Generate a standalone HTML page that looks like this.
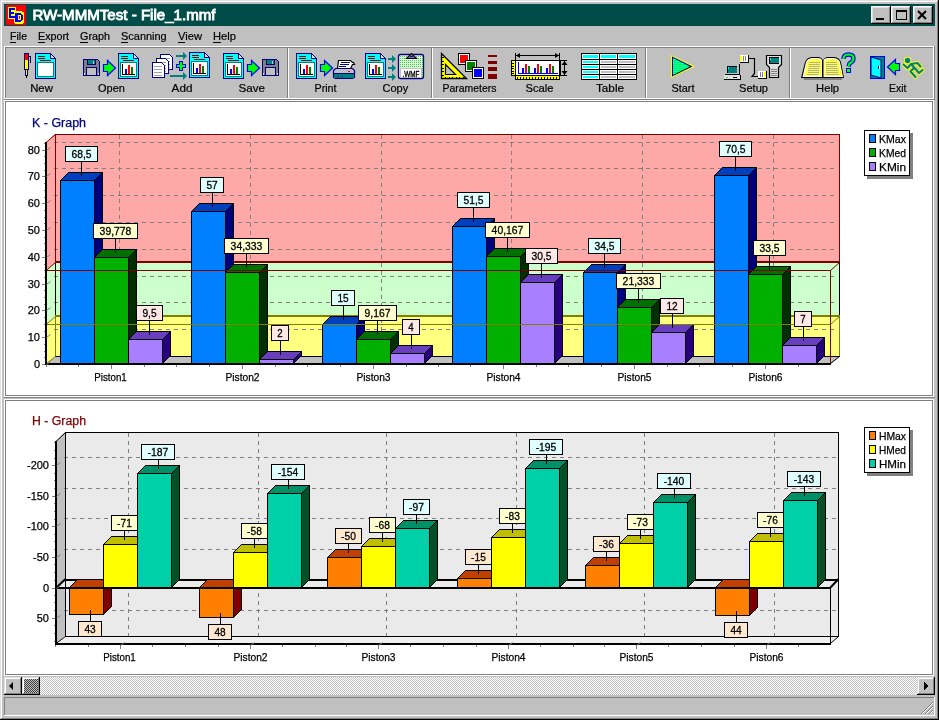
<!DOCTYPE html>
<html><head><meta charset="utf-8"><style>
html,body{margin:0;padding:0;width:939px;height:720px;overflow:hidden;background:#c0c0c0}
body{position:relative;font-family:"Liberation Sans", sans-serif}
.t{position:absolute;white-space:nowrap;line-height:1}
</style></head><body>
<svg width="939" height="720" viewBox="0 0 939 720" style="position:absolute;left:0;top:0;will-change:transform" font-family='"Liberation Sans", sans-serif' shape-rendering="crispEdges"><rect x="0" y="0" width="939" height="720" fill="#c0c0c0" /><rect x="0" y="0" width="939" height="1" fill="#dfdfdf" /><rect x="0" y="0" width="1" height="720" fill="#dfdfdf" /><rect x="1" y="1" width="937" height="1" fill="#ffffff" /><rect x="1" y="1" width="1" height="718" fill="#ffffff" /><rect x="938" y="0" width="1" height="720" fill="#000000" /><rect x="0" y="719" width="939" height="1" fill="#000000" /><rect x="937" y="1" width="1" height="718" fill="#808080" /><rect x="1" y="718" width="937" height="1" fill="#808080" /><rect x="4" y="4" width="931" height="22" fill="#004c48" /><rect x="4" y="46" width="930" height="1" fill="#ffffff" /><rect x="4" y="46" width="1" height="53" fill="#ffffff" /><rect x="5" y="47" width="928" height="1" fill="#808080" /><rect x="5" y="47" width="1" height="51" fill="#808080" /><rect x="5" y="98" width="929" height="1" fill="#ffffff" /><rect x="933" y="47" width="1" height="52" fill="#ffffff" /><rect x="4" y="99" width="931" height="1" fill="#808080" /><rect x="934" y="46" width="1" height="54" fill="#808080" /><rect x="4" y="100" width="930" height="297" fill="#ffffff" /><rect x="5" y="101" width="928" height="295" fill="#808080" /><rect x="6" y="102" width="926" height="293" fill="#ffffff" /><rect x="4" y="397" width="931" height="1" fill="#808080" /><rect x="4" y="399" width="930" height="277" fill="#ffffff" /><rect x="5" y="400" width="928" height="275" fill="#808080" /><rect x="6" y="401" width="926" height="273" fill="#ffffff" /><polygon points="46.00,142.00 55.00,134.00 840.00,134.00 840.00,356.00 830.00,364.00 46.00,364.00" fill="#ffa8a8" stroke="none" stroke-width="1" /><polygon points="46.00,270.50 55.50,262.50 840.00,262.50 840.00,356.00 830.00,364.00 46.00,364.00" fill="#ccffcc" stroke="none" stroke-width="1" shape-rendering="auto"/><polygon points="46.00,324.50 55.50,316.50 840.00,316.50 840.00,356.00 830.00,364.00 46.00,364.00" fill="#ffff80" stroke="none" stroke-width="1" shape-rendering="auto"/><polygon points="46.00,364.00 56.00,356.00 840.00,356.00 831.00,364.00" fill="#c0c0c0" stroke="none" stroke-width="1" shape-rendering="auto"/><line x1="54" y1="329.5" x2="836" y2="329.5" stroke="#808080" stroke-dasharray="4,4"/><line x1="54" y1="302.5" x2="836" y2="302.5" stroke="#808080" stroke-dasharray="4,4"/><line x1="54" y1="276.5" x2="836" y2="276.5" stroke="#808080" stroke-dasharray="4,4"/><line x1="54" y1="249.5" x2="836" y2="249.5" stroke="#808080" stroke-dasharray="4,4"/><line x1="54" y1="222.5" x2="836" y2="222.5" stroke="#808080" stroke-dasharray="4,4"/><line x1="54" y1="195.5" x2="836" y2="195.5" stroke="#808080" stroke-dasharray="4,4"/><line x1="54" y1="168.5" x2="836" y2="168.5" stroke="#808080" stroke-dasharray="4,4"/><line x1="54" y1="142.5" x2="836" y2="142.5" stroke="#808080" stroke-dasharray="4,4"/><line x1="119.5" y1="135" x2="119.5" y2="356" stroke="#808080" stroke-dasharray="4,4"/><line x1="250.5" y1="135" x2="250.5" y2="356" stroke="#808080" stroke-dasharray="4,4"/><line x1="381.5" y1="135" x2="381.5" y2="356" stroke="#808080" stroke-dasharray="4,4"/><line x1="511.5" y1="135" x2="511.5" y2="356" stroke="#808080" stroke-dasharray="4,4"/><line x1="642.5" y1="135" x2="642.5" y2="356" stroke="#808080" stroke-dasharray="4,4"/><line x1="773.5" y1="135" x2="773.5" y2="356" stroke="#808080" stroke-dasharray="4,4"/><rect x="55" y="134" width="785" height="1" fill="#800000" /><rect x="55" y="134" width="1" height="128" fill="#800000" /><rect x="55" y="262" width="1" height="54" fill="#000000" /><rect x="55" y="316" width="1" height="40" fill="#808000" /><rect x="839" y="134" width="1" height="128" fill="#800000" /><rect x="839" y="262" width="1" height="54" fill="#000000" /><rect x="839" y="316" width="1" height="40" fill="#808000" /><rect x="55" y="261" width="785" height="2" fill="#800000" /><rect x="55" y="315" width="785" height="2" fill="#808000" /><rect x="55" y="356" width="785" height="1" fill="#000000" /><line x1="46" y1="142.5" x2="55.5" y2="134.5" stroke="#800000" stroke-width="1" shape-rendering="auto"/><line x1="46" y1="270.5" x2="55.5" y2="262.5" stroke="#800000" stroke-width="1" shape-rendering="auto"/><line x1="46" y1="324.5" x2="55.5" y2="316.5" stroke="#808000" stroke-width="1" shape-rendering="auto"/><line x1="46" y1="364" x2="55.5" y2="356.5" stroke="#808000" stroke-width="1" shape-rendering="auto"/><polygon points="94.50,180.50 102.50,172.50 102.50,355.50 94.50,363.50" fill="#00007f" stroke="#000" stroke-width="1" /><polygon points="60.50,180.50 68.50,172.50 102.50,172.50 94.50,180.50" fill="#0040bf" stroke="#000" stroke-width="1" /><rect x="60.5" y="180.5" width="34" height="183" fill="#0080ff" stroke="#000"/><polygon points="225.50,211.50 233.50,203.50 233.50,355.50 225.50,363.50" fill="#00007f" stroke="#000" stroke-width="1" /><polygon points="191.50,211.50 199.50,203.50 233.50,203.50 225.50,211.50" fill="#0040bf" stroke="#000" stroke-width="1" /><rect x="191.5" y="211.5" width="34" height="152" fill="#0080ff" stroke="#000"/><polygon points="356.50,324.50 364.50,316.50 364.50,355.50 356.50,363.50" fill="#00007f" stroke="#000" stroke-width="1" /><polygon points="322.50,324.50 330.50,316.50 364.50,316.50 356.50,324.50" fill="#0040bf" stroke="#000" stroke-width="1" /><rect x="322.5" y="324.5" width="34" height="39" fill="#0080ff" stroke="#000"/><polygon points="486.50,226.50 494.50,218.50 494.50,355.50 486.50,363.50" fill="#00007f" stroke="#000" stroke-width="1" /><polygon points="452.50,226.50 460.50,218.50 494.50,218.50 486.50,226.50" fill="#0040bf" stroke="#000" stroke-width="1" /><rect x="452.5" y="226.5" width="34" height="137" fill="#0080ff" stroke="#000"/><polygon points="617.50,272.50 625.50,264.50 625.50,355.50 617.50,363.50" fill="#00007f" stroke="#000" stroke-width="1" /><polygon points="583.50,272.50 591.50,264.50 625.50,264.50 617.50,272.50" fill="#0040bf" stroke="#000" stroke-width="1" /><rect x="583.5" y="272.5" width="34" height="91" fill="#0080ff" stroke="#000"/><polygon points="748.50,175.50 756.50,167.50 756.50,355.50 748.50,363.50" fill="#00007f" stroke="#000" stroke-width="1" /><polygon points="714.50,175.50 722.50,167.50 756.50,167.50 748.50,175.50" fill="#0040bf" stroke="#000" stroke-width="1" /><rect x="714.5" y="175.5" width="34" height="188" fill="#0080ff" stroke="#000"/><polygon points="128.50,257.50 136.50,249.50 136.50,355.50 128.50,363.50" fill="#003000" stroke="#000" stroke-width="1" /><polygon points="94.50,257.50 102.50,249.50 136.50,249.50 128.50,257.50" fill="#007000" stroke="#000" stroke-width="1" /><rect x="94.5" y="257.5" width="34" height="106" fill="#00b000" stroke="#000"/><polygon points="259.50,272.50 267.50,264.50 267.50,355.50 259.50,363.50" fill="#003000" stroke="#000" stroke-width="1" /><polygon points="225.50,272.50 233.50,264.50 267.50,264.50 259.50,272.50" fill="#007000" stroke="#000" stroke-width="1" /><rect x="225.5" y="272.5" width="34" height="91" fill="#00b000" stroke="#000"/><polygon points="390.50,339.50 398.50,331.50 398.50,355.50 390.50,363.50" fill="#003000" stroke="#000" stroke-width="1" /><polygon points="356.50,339.50 364.50,331.50 398.50,331.50 390.50,339.50" fill="#007000" stroke="#000" stroke-width="1" /><rect x="356.5" y="339.5" width="34" height="24" fill="#00b000" stroke="#000"/><polygon points="520.50,256.50 528.50,248.50 528.50,355.50 520.50,363.50" fill="#003000" stroke="#000" stroke-width="1" /><polygon points="486.50,256.50 494.50,248.50 528.50,248.50 520.50,256.50" fill="#007000" stroke="#000" stroke-width="1" /><rect x="486.5" y="256.5" width="34" height="107" fill="#00b000" stroke="#000"/><polygon points="651.50,307.50 659.50,299.50 659.50,355.50 651.50,363.50" fill="#003000" stroke="#000" stroke-width="1" /><polygon points="617.50,307.50 625.50,299.50 659.50,299.50 651.50,307.50" fill="#007000" stroke="#000" stroke-width="1" /><rect x="617.5" y="307.5" width="34" height="56" fill="#00b000" stroke="#000"/><polygon points="782.50,274.50 790.50,266.50 790.50,355.50 782.50,363.50" fill="#003000" stroke="#000" stroke-width="1" /><polygon points="748.50,274.50 756.50,266.50 790.50,266.50 782.50,274.50" fill="#007000" stroke="#000" stroke-width="1" /><rect x="748.5" y="274.5" width="34" height="89" fill="#00b000" stroke="#000"/><polygon points="162.50,339.50 170.50,331.50 170.50,355.50 162.50,363.50" fill="#28007f" stroke="#000" stroke-width="1" /><polygon points="128.50,339.50 136.50,331.50 170.50,331.50 162.50,339.50" fill="#6840bf" stroke="#000" stroke-width="1" /><rect x="128.5" y="339.5" width="34" height="24" fill="#a880ff" stroke="#000"/><polygon points="293.50,359.50 301.50,351.50 301.50,355.50 293.50,363.50" fill="#28007f" stroke="#000" stroke-width="1" /><polygon points="259.50,359.50 267.50,351.50 301.50,351.50 293.50,359.50" fill="#6840bf" stroke="#000" stroke-width="1" /><rect x="259.5" y="359.5" width="34" height="4" fill="#a880ff" stroke="#000"/><polygon points="424.50,353.50 432.50,345.50 432.50,355.50 424.50,363.50" fill="#28007f" stroke="#000" stroke-width="1" /><polygon points="390.50,353.50 398.50,345.50 432.50,345.50 424.50,353.50" fill="#6840bf" stroke="#000" stroke-width="1" /><rect x="390.5" y="353.5" width="34" height="10" fill="#a880ff" stroke="#000"/><polygon points="554.50,282.50 562.50,274.50 562.50,355.50 554.50,363.50" fill="#28007f" stroke="#000" stroke-width="1" /><polygon points="520.50,282.50 528.50,274.50 562.50,274.50 554.50,282.50" fill="#6840bf" stroke="#000" stroke-width="1" /><rect x="520.5" y="282.5" width="34" height="81" fill="#a880ff" stroke="#000"/><polygon points="685.50,332.50 693.50,324.50 693.50,355.50 685.50,363.50" fill="#28007f" stroke="#000" stroke-width="1" /><polygon points="651.50,332.50 659.50,324.50 693.50,324.50 685.50,332.50" fill="#6840bf" stroke="#000" stroke-width="1" /><rect x="651.5" y="332.5" width="34" height="31" fill="#a880ff" stroke="#000"/><polygon points="816.50,345.50 824.50,337.50 824.50,355.50 816.50,363.50" fill="#28007f" stroke="#000" stroke-width="1" /><polygon points="782.50,345.50 790.50,337.50 824.50,337.50 816.50,345.50" fill="#6840bf" stroke="#000" stroke-width="1" /><rect x="782.5" y="345.5" width="34" height="18" fill="#a880ff" stroke="#000"/><rect x="46" y="270" width="785" height="1" fill="#800000" /><rect x="46" y="324" width="785" height="1" fill="#808000" /><rect x="830" y="270" width="1" height="94" fill="#800000" /><line x1="830.5" y1="270.5" x2="839.5" y2="262.5" stroke="#800000" stroke-width="1" shape-rendering="auto"/><line x1="830.5" y1="324.5" x2="839.5" y2="316.5" stroke="#808000" stroke-width="1" shape-rendering="auto"/><line x1="830.5" y1="363.5" x2="839.5" y2="356.5" stroke="#000" stroke-width="1" shape-rendering="auto"/><rect x="45" y="142" width="2" height="223" fill="#000" /><rect x="45" y="363" width="786" height="2" fill="#000" /><rect x="42" y="364" width="3" height="1" fill="#808080" /><line x1="46.5" y1="364.5" x2="50.5" y2="361.5" stroke="#808080" stroke-width="1" shape-rendering="auto"/><text x="40" y="368" font-size="11" fill="#000" text-anchor="end"  stroke="#000" stroke-width="0.25">0</text><rect x="42" y="337" width="3" height="1" fill="#808080" /><line x1="46.5" y1="337.5" x2="50.5" y2="334.5" stroke="#808080" stroke-width="1" shape-rendering="auto"/><text x="40" y="341" font-size="11" fill="#000" text-anchor="end"  stroke="#000" stroke-width="0.25">10</text><rect x="42" y="310" width="3" height="1" fill="#808080" /><line x1="46.5" y1="310.5" x2="50.5" y2="307.5" stroke="#808080" stroke-width="1" shape-rendering="auto"/><text x="40" y="314" font-size="11" fill="#000" text-anchor="end"  stroke="#000" stroke-width="0.25">20</text><rect x="42" y="284" width="3" height="1" fill="#808080" /><line x1="46.5" y1="284.5" x2="50.5" y2="281.5" stroke="#808080" stroke-width="1" shape-rendering="auto"/><text x="40" y="288" font-size="11" fill="#000" text-anchor="end"  stroke="#000" stroke-width="0.25">30</text><rect x="42" y="257" width="3" height="1" fill="#808080" /><line x1="46.5" y1="257.5" x2="50.5" y2="254.5" stroke="#808080" stroke-width="1" shape-rendering="auto"/><text x="40" y="261" font-size="11" fill="#000" text-anchor="end"  stroke="#000" stroke-width="0.25">40</text><rect x="42" y="230" width="3" height="1" fill="#808080" /><line x1="46.5" y1="230.5" x2="50.5" y2="227.5" stroke="#808080" stroke-width="1" shape-rendering="auto"/><text x="40" y="234" font-size="11" fill="#000" text-anchor="end"  stroke="#000" stroke-width="0.25">50</text><rect x="42" y="203" width="3" height="1" fill="#808080" /><line x1="46.5" y1="203.5" x2="50.5" y2="200.5" stroke="#808080" stroke-width="1" shape-rendering="auto"/><text x="40" y="207" font-size="11" fill="#000" text-anchor="end"  stroke="#000" stroke-width="0.25">60</text><rect x="42" y="176" width="3" height="1" fill="#808080" /><line x1="46.5" y1="176.5" x2="50.5" y2="173.5" stroke="#808080" stroke-width="1" shape-rendering="auto"/><text x="40" y="180" font-size="11" fill="#000" text-anchor="end"  stroke="#000" stroke-width="0.25">70</text><rect x="42" y="150" width="3" height="1" fill="#808080" /><line x1="46.5" y1="150.5" x2="50.5" y2="147.5" stroke="#808080" stroke-width="1" shape-rendering="auto"/><text x="40" y="154" font-size="11" fill="#000" text-anchor="end"  stroke="#000" stroke-width="0.25">80</text><rect x="44" y="357" width="1" height="1" fill="#808080" /><rect x="44" y="351" width="1" height="1" fill="#808080" /><rect x="44" y="344" width="1" height="1" fill="#808080" /><rect x="44" y="331" width="1" height="1" fill="#808080" /><rect x="44" y="324" width="1" height="1" fill="#808080" /><rect x="44" y="317" width="1" height="1" fill="#808080" /><rect x="44" y="304" width="1" height="1" fill="#808080" /><rect x="44" y="297" width="1" height="1" fill="#808080" /><rect x="44" y="290" width="1" height="1" fill="#808080" /><rect x="44" y="277" width="1" height="1" fill="#808080" /><rect x="44" y="270" width="1" height="1" fill="#808080" /><rect x="44" y="264" width="1" height="1" fill="#808080" /><rect x="44" y="250" width="1" height="1" fill="#808080" /><rect x="44" y="243" width="1" height="1" fill="#808080" /><rect x="44" y="237" width="1" height="1" fill="#808080" /><rect x="44" y="223" width="1" height="1" fill="#808080" /><rect x="44" y="217" width="1" height="1" fill="#808080" /><rect x="44" y="210" width="1" height="1" fill="#808080" /><rect x="44" y="197" width="1" height="1" fill="#808080" /><rect x="44" y="190" width="1" height="1" fill="#808080" /><rect x="44" y="183" width="1" height="1" fill="#808080" /><rect x="44" y="170" width="1" height="1" fill="#808080" /><rect x="44" y="163" width="1" height="1" fill="#808080" /><rect x="44" y="156" width="1" height="1" fill="#808080" /><rect x="44" y="143" width="1" height="1" fill="#808080" /><rect x="111" y="365" width="1" height="4" fill="#808080" /><rect x="78" y="365" width="1" height="2" fill="#808080" /><rect x="144" y="365" width="1" height="2" fill="#808080" /><rect x="176" y="365" width="1" height="2" fill="#808080" /><rect x="46" y="365" width="1" height="2" fill="#808080" /><rect x="242" y="365" width="1" height="4" fill="#808080" /><rect x="209" y="365" width="1" height="2" fill="#808080" /><rect x="275" y="365" width="1" height="2" fill="#808080" /><rect x="307" y="365" width="1" height="2" fill="#808080" /><rect x="373" y="365" width="1" height="4" fill="#808080" /><rect x="340" y="365" width="1" height="2" fill="#808080" /><rect x="406" y="365" width="1" height="2" fill="#808080" /><rect x="438" y="365" width="1" height="2" fill="#808080" /><rect x="503" y="365" width="1" height="4" fill="#808080" /><rect x="470" y="365" width="1" height="2" fill="#808080" /><rect x="536" y="365" width="1" height="2" fill="#808080" /><rect x="568" y="365" width="1" height="2" fill="#808080" /><rect x="634" y="365" width="1" height="4" fill="#808080" /><rect x="601" y="365" width="1" height="2" fill="#808080" /><rect x="667" y="365" width="1" height="2" fill="#808080" /><rect x="699" y="365" width="1" height="2" fill="#808080" /><rect x="765" y="365" width="1" height="4" fill="#808080" /><rect x="732" y="365" width="1" height="2" fill="#808080" /><rect x="798" y="365" width="1" height="2" fill="#808080" /><text x="110.5" y="381" font-size="11" fill="#000" text-anchor="middle" textLength="32.5" lengthAdjust="spacingAndGlyphs" stroke="#000" stroke-width="0.25">Piston1</text><text x="242.5" y="381" font-size="11" fill="#000" text-anchor="middle" textLength="34" lengthAdjust="spacingAndGlyphs" stroke="#000" stroke-width="0.25">Piston2</text><text x="373.5" y="381" font-size="11" fill="#000" text-anchor="middle" textLength="34" lengthAdjust="spacingAndGlyphs" stroke="#000" stroke-width="0.25">Piston3</text><text x="503.5" y="381" font-size="11" fill="#000" text-anchor="middle" textLength="34" lengthAdjust="spacingAndGlyphs" stroke="#000" stroke-width="0.25">Piston4</text><text x="634.5" y="381" font-size="11" fill="#000" text-anchor="middle" textLength="34" lengthAdjust="spacingAndGlyphs" stroke="#000" stroke-width="0.25">Piston5</text><text x="765.5" y="381" font-size="11" fill="#000" text-anchor="middle" textLength="34" lengthAdjust="spacingAndGlyphs" stroke="#000" stroke-width="0.25">Piston6</text><rect x="81" y="162" width="1" height="14" fill="#000" /><rect x="65.5" y="146.5" width="32" height="15" fill="#e0ffff" stroke="#000"/><text x="81.5" y="158" font-size="11" fill="#000" text-anchor="middle" stroke="#000" stroke-width="0.3" textLength="20.06" lengthAdjust="spacingAndGlyphs">68,5</text><rect x="212" y="193" width="1" height="14" fill="#000" /><rect x="200.5" y="177.5" width="23" height="15" fill="#e0ffff" stroke="#000"/><text x="212.0" y="189" font-size="11" fill="#000" text-anchor="middle" stroke="#000" stroke-width="0.3" textLength="11.25" lengthAdjust="spacingAndGlyphs">57</text><rect x="343" y="306" width="1" height="14" fill="#000" /><rect x="331.5" y="290.5" width="23" height="15" fill="#e0ffff" stroke="#000"/><text x="343.0" y="302" font-size="11" fill="#000" text-anchor="middle" stroke="#000" stroke-width="0.3" textLength="11.25" lengthAdjust="spacingAndGlyphs">15</text><rect x="473" y="208" width="1" height="14" fill="#000" /><rect x="457.5" y="192.5" width="32" height="15" fill="#e0ffff" stroke="#000"/><text x="473.5" y="204" font-size="11" fill="#000" text-anchor="middle" stroke="#000" stroke-width="0.3" textLength="20.06" lengthAdjust="spacingAndGlyphs">51,5</text><rect x="604" y="254" width="1" height="14" fill="#000" /><rect x="588.5" y="238.5" width="32" height="15" fill="#e0ffff" stroke="#000"/><text x="604.5" y="250" font-size="11" fill="#000" text-anchor="middle" stroke="#000" stroke-width="0.3" textLength="20.06" lengthAdjust="spacingAndGlyphs">34,5</text><rect x="735" y="157" width="1" height="14" fill="#000" /><rect x="719.5" y="141.5" width="32" height="15" fill="#e0ffff" stroke="#000"/><text x="735.5" y="153" font-size="11" fill="#000" text-anchor="middle" stroke="#000" stroke-width="0.3" textLength="20.06" lengthAdjust="spacingAndGlyphs">70,5</text><rect x="115" y="239" width="1" height="14" fill="#000" /><rect x="93.5" y="223.5" width="44" height="15" fill="#ffffd0" stroke="#000"/><text x="115.5" y="235" font-size="11" fill="#000" text-anchor="middle" stroke="#000" stroke-width="0.3" textLength="31.81" lengthAdjust="spacingAndGlyphs">39,778</text><rect x="246" y="254" width="1" height="14" fill="#000" /><rect x="224.5" y="238.5" width="44" height="15" fill="#ffffd0" stroke="#000"/><text x="246.5" y="250" font-size="11" fill="#000" text-anchor="middle" stroke="#000" stroke-width="0.3" textLength="31.81" lengthAdjust="spacingAndGlyphs">34,333</text><rect x="377" y="321" width="1" height="14" fill="#000" /><rect x="358.5" y="305.5" width="38" height="15" fill="#ffffd0" stroke="#000"/><text x="377.5" y="317" font-size="11" fill="#000" text-anchor="middle" stroke="#000" stroke-width="0.3" textLength="25.94" lengthAdjust="spacingAndGlyphs">9,167</text><rect x="507" y="238" width="1" height="14" fill="#000" /><rect x="485.5" y="222.5" width="44" height="15" fill="#ffffd0" stroke="#000"/><text x="507.5" y="234" font-size="11" fill="#000" text-anchor="middle" stroke="#000" stroke-width="0.3" textLength="31.81" lengthAdjust="spacingAndGlyphs">40,167</text><rect x="638" y="289" width="1" height="14" fill="#000" /><rect x="616.5" y="273.5" width="44" height="15" fill="#ffffd0" stroke="#000"/><text x="638.5" y="285" font-size="11" fill="#000" text-anchor="middle" stroke="#000" stroke-width="0.3" textLength="31.81" lengthAdjust="spacingAndGlyphs">21,333</text><rect x="769" y="256" width="1" height="14" fill="#000" /><rect x="753.5" y="240.5" width="32" height="15" fill="#ffffd0" stroke="#000"/><text x="769.5" y="252" font-size="11" fill="#000" text-anchor="middle" stroke="#000" stroke-width="0.3" textLength="20.06" lengthAdjust="spacingAndGlyphs">33,5</text><rect x="149" y="321" width="1" height="14" fill="#000" /><rect x="136.5" y="305.5" width="26" height="15" fill="#ffe8e8" stroke="#000"/><text x="149.5" y="317" font-size="11" fill="#000" text-anchor="middle" stroke="#000" stroke-width="0.3" textLength="14.19" lengthAdjust="spacingAndGlyphs">9,5</text><rect x="280" y="341" width="1" height="14" fill="#000" /><rect x="271.5" y="325.5" width="17" height="15" fill="#ffe8e8" stroke="#000"/><text x="280.0" y="337" font-size="11" fill="#000" text-anchor="middle" stroke="#000" stroke-width="0.3" textLength="5.38" lengthAdjust="spacingAndGlyphs">2</text><rect x="411" y="335" width="1" height="14" fill="#000" /><rect x="402.5" y="319.5" width="17" height="15" fill="#ffe8e8" stroke="#000"/><text x="411.0" y="331" font-size="11" fill="#000" text-anchor="middle" stroke="#000" stroke-width="0.3" textLength="5.38" lengthAdjust="spacingAndGlyphs">4</text><rect x="541" y="264" width="1" height="14" fill="#000" /><rect x="525.5" y="248.5" width="32" height="15" fill="#ffe8e8" stroke="#000"/><text x="541.5" y="260" font-size="11" fill="#000" text-anchor="middle" stroke="#000" stroke-width="0.3" textLength="20.06" lengthAdjust="spacingAndGlyphs">30,5</text><rect x="672" y="314" width="1" height="14" fill="#000" /><rect x="660.5" y="298.5" width="23" height="15" fill="#ffe8e8" stroke="#000"/><text x="672.0" y="310" font-size="11" fill="#000" text-anchor="middle" stroke="#000" stroke-width="0.3" textLength="11.25" lengthAdjust="spacingAndGlyphs">12</text><rect x="803" y="327" width="1" height="14" fill="#000" /><rect x="794.5" y="311.5" width="17" height="15" fill="#ffe8e8" stroke="#000"/><text x="803.0" y="323" font-size="11" fill="#000" text-anchor="middle" stroke="#000" stroke-width="0.3" textLength="5.38" lengthAdjust="spacingAndGlyphs">7</text><text x="32" y="127" font-size="12.5" fill="#000080" text-anchor="start" textLength="54" lengthAdjust="spacingAndGlyphs" stroke="#000080" stroke-width="0.25">K - Graph</text><rect x="867" y="133" width="46" height="46" fill="#808080" /><rect x="864.5" y="130.5" width="45" height="45" fill="#fff" stroke="#000"/><rect x="869.5" y="134.5" width="6" height="8" fill="#0080ff" stroke="#000"/><text x="879" y="143" font-size="11" fill="#000" text-anchor="start" textLength="27" lengthAdjust="spacingAndGlyphs" stroke="#000" stroke-width="0.25">KMax</text><rect x="869.5" y="148.5" width="6" height="8" fill="#00b000" stroke="#000"/><text x="879" y="157" font-size="11" fill="#000" text-anchor="start" textLength="27" lengthAdjust="spacingAndGlyphs" stroke="#000" stroke-width="0.25">KMed</text><rect x="869.5" y="162.5" width="6" height="8" fill="#a880ff" stroke="#000"/><text x="879" y="171" font-size="11" fill="#000" text-anchor="start" textLength="27" lengthAdjust="spacingAndGlyphs" stroke="#000" stroke-width="0.25">KMin</text><polygon points="56.00,441.00 65.00,432.00 65.00,636.00 56.00,644.00" fill="#c0c0c0" stroke="none" stroke-width="1" shape-rendering="auto"/><rect x="65" y="432" width="774" height="205" fill="#eaeaea" /><polygon points="56.00,644.00 65.00,636.00 839.00,636.00 831.00,644.00" fill="#f0f0f0" stroke="none" stroke-width="1" shape-rendering="auto"/><polygon points="56.00,588.00 65.00,580.00 839.00,580.00 830.00,588.00" fill="#eaeaea" stroke="none" stroke-width="1" shape-rendering="auto"/><polygon points="830.00,588.00 839.00,580.00 839.00,636.00 830.00,644.00" fill="#eaeaea" stroke="none" stroke-width="1" shape-rendering="auto"/><line x1="64" y1="457.5" x2="836" y2="457.5" stroke="#808080" stroke-dasharray="4,4"/><line x1="64" y1="488.5" x2="836" y2="488.5" stroke="#808080" stroke-dasharray="4,4"/><line x1="64" y1="518.5" x2="836" y2="518.5" stroke="#808080" stroke-dasharray="4,4"/><line x1="64" y1="549.5" x2="836" y2="549.5" stroke="#808080" stroke-dasharray="4,4"/><line x1="64" y1="610.5" x2="836" y2="610.5" stroke="#808080" stroke-dasharray="4,4"/><line x1="128.5" y1="433" x2="128.5" y2="636" stroke="#808080" stroke-dasharray="4,4"/><line x1="258.5" y1="433" x2="258.5" y2="636" stroke="#808080" stroke-dasharray="4,4"/><line x1="386.5" y1="433" x2="386.5" y2="636" stroke="#808080" stroke-dasharray="4,4"/><line x1="516.5" y1="433" x2="516.5" y2="636" stroke="#808080" stroke-dasharray="4,4"/><line x1="644.5" y1="433" x2="644.5" y2="636" stroke="#808080" stroke-dasharray="4,4"/><line x1="774.5" y1="433" x2="774.5" y2="636" stroke="#808080" stroke-dasharray="4,4"/><rect x="65.5" y="432.5" width="773" height="204" fill="none" stroke="#000"/><line x1="56" y1="441.5" x2="65.5" y2="432.5" stroke="#000" stroke-width="1" shape-rendering="auto"/><line x1="56" y1="643.5" x2="65.5" y2="636.5" stroke="#000" stroke-width="1" shape-rendering="auto"/><rect x="65" y="579" width="774" height="2" fill="#000" /><line x1="56" y1="588" x2="65.5" y2="579" stroke="#000" stroke-width="2" shape-rendering="auto"/><rect x="54" y="442" width="1" height="1" fill="#808080" /><rect x="54" y="450" width="1" height="1" fill="#808080" /><rect x="54" y="458" width="1" height="1" fill="#808080" /><rect x="54" y="473" width="1" height="1" fill="#808080" /><rect x="54" y="480" width="1" height="1" fill="#808080" /><rect x="54" y="488" width="1" height="1" fill="#808080" /><rect x="54" y="503" width="1" height="1" fill="#808080" /><rect x="54" y="511" width="1" height="1" fill="#808080" /><rect x="54" y="519" width="1" height="1" fill="#808080" /><rect x="54" y="534" width="1" height="1" fill="#808080" /><rect x="54" y="541" width="1" height="1" fill="#808080" /><rect x="54" y="549" width="1" height="1" fill="#808080" /><rect x="54" y="564" width="1" height="1" fill="#808080" /><rect x="54" y="572" width="1" height="1" fill="#808080" /><rect x="54" y="580" width="1" height="1" fill="#808080" /><rect x="54" y="595" width="1" height="1" fill="#808080" /><rect x="54" y="602" width="1" height="1" fill="#808080" /><rect x="54" y="610" width="1" height="1" fill="#808080" /><rect x="54" y="625" width="1" height="1" fill="#808080" /><rect x="54" y="633" width="1" height="1" fill="#808080" /><rect x="54" y="641" width="1" height="1" fill="#808080" /><polygon points="103.50,587.50 111.50,579.50 111.50,606.50 103.50,614.50" fill="#7f0000" stroke="#000" stroke-width="1" /><polygon points="69.50,587.50 77.50,579.50 111.50,579.50 103.50,587.50" fill="#bf4000" stroke="#000" stroke-width="1" /><rect x="69.5" y="587.5" width="34" height="27" fill="#ff8000" stroke="#000"/><polygon points="233.50,587.50 241.50,579.50 241.50,609.50 233.50,617.50" fill="#7f0000" stroke="#000" stroke-width="1" /><polygon points="199.50,587.50 207.50,579.50 241.50,579.50 233.50,587.50" fill="#bf4000" stroke="#000" stroke-width="1" /><rect x="199.5" y="587.5" width="34" height="30" fill="#ff8000" stroke="#000"/><polygon points="361.50,557.50 369.50,549.50 369.50,579.50 361.50,587.50" fill="#7f0000" stroke="#000" stroke-width="1" /><polygon points="327.50,557.50 335.50,549.50 369.50,549.50 361.50,557.50" fill="#bf4000" stroke="#000" stroke-width="1" /><rect x="327.5" y="557.5" width="34" height="30" fill="#ff8000" stroke="#000"/><polygon points="491.50,578.50 499.50,570.50 499.50,579.50 491.50,587.50" fill="#7f0000" stroke="#000" stroke-width="1" /><polygon points="457.50,578.50 465.50,570.50 499.50,570.50 491.50,578.50" fill="#bf4000" stroke="#000" stroke-width="1" /><rect x="457.5" y="578.5" width="34" height="9" fill="#ff8000" stroke="#000"/><polygon points="619.50,565.50 627.50,557.50 627.50,579.50 619.50,587.50" fill="#7f0000" stroke="#000" stroke-width="1" /><polygon points="585.50,565.50 593.50,557.50 627.50,557.50 619.50,565.50" fill="#bf4000" stroke="#000" stroke-width="1" /><rect x="585.5" y="565.5" width="34" height="22" fill="#ff8000" stroke="#000"/><polygon points="749.50,587.50 757.50,579.50 757.50,607.50 749.50,615.50" fill="#7f0000" stroke="#000" stroke-width="1" /><polygon points="715.50,587.50 723.50,579.50 757.50,579.50 749.50,587.50" fill="#bf4000" stroke="#000" stroke-width="1" /><rect x="715.5" y="587.5" width="34" height="28" fill="#ff8000" stroke="#000"/><polygon points="137.50,544.50 145.50,536.50 145.50,579.50 137.50,587.50" fill="#7f7f00" stroke="#000" stroke-width="1" /><polygon points="103.50,544.50 111.50,536.50 145.50,536.50 137.50,544.50" fill="#bfbf00" stroke="#000" stroke-width="1" /><rect x="103.5" y="544.5" width="34" height="43" fill="#ffff00" stroke="#000"/><polygon points="267.50,552.50 275.50,544.50 275.50,579.50 267.50,587.50" fill="#7f7f00" stroke="#000" stroke-width="1" /><polygon points="233.50,552.50 241.50,544.50 275.50,544.50 267.50,552.50" fill="#bfbf00" stroke="#000" stroke-width="1" /><rect x="233.5" y="552.5" width="34" height="35" fill="#ffff00" stroke="#000"/><polygon points="395.50,546.50 403.50,538.50 403.50,579.50 395.50,587.50" fill="#7f7f00" stroke="#000" stroke-width="1" /><polygon points="361.50,546.50 369.50,538.50 403.50,538.50 395.50,546.50" fill="#bfbf00" stroke="#000" stroke-width="1" /><rect x="361.5" y="546.5" width="34" height="41" fill="#ffff00" stroke="#000"/><polygon points="525.50,537.50 533.50,529.50 533.50,579.50 525.50,587.50" fill="#7f7f00" stroke="#000" stroke-width="1" /><polygon points="491.50,537.50 499.50,529.50 533.50,529.50 525.50,537.50" fill="#bfbf00" stroke="#000" stroke-width="1" /><rect x="491.5" y="537.5" width="34" height="50" fill="#ffff00" stroke="#000"/><polygon points="653.50,543.50 661.50,535.50 661.50,579.50 653.50,587.50" fill="#7f7f00" stroke="#000" stroke-width="1" /><polygon points="619.50,543.50 627.50,535.50 661.50,535.50 653.50,543.50" fill="#bfbf00" stroke="#000" stroke-width="1" /><rect x="619.5" y="543.5" width="34" height="44" fill="#ffff00" stroke="#000"/><polygon points="783.50,541.50 791.50,533.50 791.50,579.50 783.50,587.50" fill="#7f7f00" stroke="#000" stroke-width="1" /><polygon points="749.50,541.50 757.50,533.50 791.50,533.50 783.50,541.50" fill="#bfbf00" stroke="#000" stroke-width="1" /><rect x="749.5" y="541.5" width="34" height="46" fill="#ffff00" stroke="#000"/><polygon points="171.50,473.50 179.50,465.50 179.50,579.50 171.50,587.50" fill="#005028" stroke="#000" stroke-width="1" /><polygon points="137.50,473.50 145.50,465.50 179.50,465.50 171.50,473.50" fill="#009068" stroke="#000" stroke-width="1" /><rect x="137.5" y="473.5" width="34" height="114" fill="#00d0a8" stroke="#000"/><polygon points="301.50,493.50 309.50,485.50 309.50,579.50 301.50,587.50" fill="#005028" stroke="#000" stroke-width="1" /><polygon points="267.50,493.50 275.50,485.50 309.50,485.50 301.50,493.50" fill="#009068" stroke="#000" stroke-width="1" /><rect x="267.5" y="493.5" width="34" height="94" fill="#00d0a8" stroke="#000"/><polygon points="429.50,528.50 437.50,520.50 437.50,579.50 429.50,587.50" fill="#005028" stroke="#000" stroke-width="1" /><polygon points="395.50,528.50 403.50,520.50 437.50,520.50 429.50,528.50" fill="#009068" stroke="#000" stroke-width="1" /><rect x="395.5" y="528.5" width="34" height="59" fill="#00d0a8" stroke="#000"/><polygon points="559.50,468.50 567.50,460.50 567.50,579.50 559.50,587.50" fill="#005028" stroke="#000" stroke-width="1" /><polygon points="525.50,468.50 533.50,460.50 567.50,460.50 559.50,468.50" fill="#009068" stroke="#000" stroke-width="1" /><rect x="525.5" y="468.5" width="34" height="119" fill="#00d0a8" stroke="#000"/><polygon points="687.50,502.50 695.50,494.50 695.50,579.50 687.50,587.50" fill="#005028" stroke="#000" stroke-width="1" /><polygon points="653.50,502.50 661.50,494.50 695.50,494.50 687.50,502.50" fill="#009068" stroke="#000" stroke-width="1" /><rect x="653.5" y="502.5" width="34" height="85" fill="#00d0a8" stroke="#000"/><polygon points="817.50,500.50 825.50,492.50 825.50,579.50 817.50,587.50" fill="#005028" stroke="#000" stroke-width="1" /><polygon points="783.50,500.50 791.50,492.50 825.50,492.50 817.50,500.50" fill="#009068" stroke="#000" stroke-width="1" /><rect x="783.5" y="500.5" width="34" height="87" fill="#00d0a8" stroke="#000"/><rect x="55" y="587" width="776" height="2" fill="#000" /><line x1="830" y1="588" x2="838.5" y2="579" stroke="#000" stroke-width="2" shape-rendering="auto"/><rect x="830" y="588" width="1" height="56" fill="#000" /><line x1="830.5" y1="643.5" x2="838.5" y2="636.5" stroke="#000" stroke-width="1" shape-rendering="auto"/><rect x="55" y="441" width="2" height="204" fill="#000" /><rect x="55" y="643" width="776" height="2" fill="#000" /><rect x="52" y="465" width="3" height="1" fill="#808080" /><line x1="56.5" y1="465.5" x2="60.5" y2="462.5" stroke="#808080" stroke-width="1" shape-rendering="auto"/><text x="49" y="469" font-size="11" fill="#000" text-anchor="end"  stroke="#000" stroke-width="0.25">-200</text><rect x="52" y="496" width="3" height="1" fill="#808080" /><line x1="56.5" y1="496.5" x2="60.5" y2="493.5" stroke="#808080" stroke-width="1" shape-rendering="auto"/><text x="49" y="500" font-size="11" fill="#000" text-anchor="end"  stroke="#000" stroke-width="0.25">-150</text><rect x="52" y="526" width="3" height="1" fill="#808080" /><line x1="56.5" y1="526.5" x2="60.5" y2="523.5" stroke="#808080" stroke-width="1" shape-rendering="auto"/><text x="49" y="530" font-size="11" fill="#000" text-anchor="end"  stroke="#000" stroke-width="0.25">-100</text><rect x="52" y="557" width="3" height="1" fill="#808080" /><line x1="56.5" y1="557.5" x2="60.5" y2="554.5" stroke="#808080" stroke-width="1" shape-rendering="auto"/><text x="49" y="561" font-size="11" fill="#000" text-anchor="end"  stroke="#000" stroke-width="0.25">-50</text><rect x="52" y="588" width="3" height="1" fill="#808080" /><line x1="56.5" y1="588.5" x2="60.5" y2="585.5" stroke="#808080" stroke-width="1" shape-rendering="auto"/><text x="49" y="592" font-size="11" fill="#000" text-anchor="end"  stroke="#000" stroke-width="0.25">0</text><rect x="52" y="618" width="3" height="1" fill="#808080" /><line x1="56.5" y1="618.5" x2="60.5" y2="615.5" stroke="#808080" stroke-width="1" shape-rendering="auto"/><text x="49" y="622" font-size="11" fill="#000" text-anchor="end"  stroke="#000" stroke-width="0.25">50</text><rect x="120" y="645" width="1" height="4" fill="#808080" /><line x1="120.5" y1="645.5" x2="124.5" y2="642.5" stroke="#808080" stroke-width="1" shape-rendering="auto"/><rect x="88" y="645" width="1" height="2" fill="#808080" /><rect x="152" y="645" width="1" height="2" fill="#808080" /><rect x="185" y="645" width="1" height="2" fill="#808080" /><rect x="55" y="645" width="1" height="2" fill="#808080" /><rect x="250" y="645" width="1" height="4" fill="#808080" /><line x1="250.5" y1="645.5" x2="254.5" y2="642.5" stroke="#808080" stroke-width="1" shape-rendering="auto"/><rect x="218" y="645" width="1" height="2" fill="#808080" /><rect x="282" y="645" width="1" height="2" fill="#808080" /><rect x="315" y="645" width="1" height="2" fill="#808080" /><rect x="378" y="645" width="1" height="4" fill="#808080" /><line x1="378.5" y1="645.5" x2="382.5" y2="642.5" stroke="#808080" stroke-width="1" shape-rendering="auto"/><rect x="346" y="645" width="1" height="2" fill="#808080" /><rect x="410" y="645" width="1" height="2" fill="#808080" /><rect x="443" y="645" width="1" height="2" fill="#808080" /><rect x="508" y="645" width="1" height="4" fill="#808080" /><line x1="508.5" y1="645.5" x2="512.5" y2="642.5" stroke="#808080" stroke-width="1" shape-rendering="auto"/><rect x="476" y="645" width="1" height="2" fill="#808080" /><rect x="540" y="645" width="1" height="2" fill="#808080" /><rect x="573" y="645" width="1" height="2" fill="#808080" /><rect x="636" y="645" width="1" height="4" fill="#808080" /><line x1="636.5" y1="645.5" x2="640.5" y2="642.5" stroke="#808080" stroke-width="1" shape-rendering="auto"/><rect x="604" y="645" width="1" height="2" fill="#808080" /><rect x="668" y="645" width="1" height="2" fill="#808080" /><rect x="701" y="645" width="1" height="2" fill="#808080" /><rect x="766" y="645" width="1" height="4" fill="#808080" /><line x1="766.5" y1="645.5" x2="770.5" y2="642.5" stroke="#808080" stroke-width="1" shape-rendering="auto"/><rect x="734" y="645" width="1" height="2" fill="#808080" /><rect x="798" y="645" width="1" height="2" fill="#808080" /><text x="119.5" y="661" font-size="11" fill="#000" text-anchor="middle" textLength="32.5" lengthAdjust="spacingAndGlyphs" stroke="#000" stroke-width="0.25">Piston1</text><text x="250.5" y="661" font-size="11" fill="#000" text-anchor="middle" textLength="34" lengthAdjust="spacingAndGlyphs" stroke="#000" stroke-width="0.25">Piston2</text><text x="378.5" y="661" font-size="11" fill="#000" text-anchor="middle" textLength="34" lengthAdjust="spacingAndGlyphs" stroke="#000" stroke-width="0.25">Piston3</text><text x="508.5" y="661" font-size="11" fill="#000" text-anchor="middle" textLength="34" lengthAdjust="spacingAndGlyphs" stroke="#000" stroke-width="0.25">Piston4</text><text x="636.5" y="661" font-size="11" fill="#000" text-anchor="middle" textLength="34" lengthAdjust="spacingAndGlyphs" stroke="#000" stroke-width="0.25">Piston5</text><text x="766.5" y="661" font-size="11" fill="#000" text-anchor="middle" textLength="34" lengthAdjust="spacingAndGlyphs" stroke="#000" stroke-width="0.25">Piston6</text><rect x="90" y="610" width="1" height="11" fill="#000" /><rect x="78.5" y="621.5" width="23" height="15" fill="#ffe8d0" stroke="#000"/><text x="90.0" y="633" font-size="11" fill="#000" text-anchor="middle" stroke="#000" stroke-width="0.3" textLength="11.25" lengthAdjust="spacingAndGlyphs">43</text><rect x="220" y="613" width="1" height="11" fill="#000" /><rect x="208.5" y="624.5" width="23" height="15" fill="#ffe8d0" stroke="#000"/><text x="220.0" y="636" font-size="11" fill="#000" text-anchor="middle" stroke="#000" stroke-width="0.3" textLength="11.25" lengthAdjust="spacingAndGlyphs">48</text><rect x="348" y="544" width="1" height="9" fill="#000" /><rect x="335.5" y="528.5" width="26" height="15" fill="#ffe8d0" stroke="#000"/><text x="348.5" y="540" font-size="11" fill="#000" text-anchor="middle" stroke="#000" stroke-width="0.3" textLength="14.76" lengthAdjust="spacingAndGlyphs">-50</text><rect x="478" y="565" width="1" height="9" fill="#000" /><rect x="465.5" y="549.5" width="26" height="15" fill="#ffe8d0" stroke="#000"/><text x="478.5" y="561" font-size="11" fill="#000" text-anchor="middle" stroke="#000" stroke-width="0.3" textLength="14.76" lengthAdjust="spacingAndGlyphs">-15</text><rect x="606" y="552" width="1" height="9" fill="#000" /><rect x="593.5" y="536.5" width="26" height="15" fill="#ffe8d0" stroke="#000"/><text x="606.5" y="548" font-size="11" fill="#000" text-anchor="middle" stroke="#000" stroke-width="0.3" textLength="14.76" lengthAdjust="spacingAndGlyphs">-36</text><rect x="736" y="611" width="1" height="11" fill="#000" /><rect x="724.5" y="622.5" width="23" height="15" fill="#ffe8d0" stroke="#000"/><text x="736.0" y="634" font-size="11" fill="#000" text-anchor="middle" stroke="#000" stroke-width="0.3" textLength="11.25" lengthAdjust="spacingAndGlyphs">44</text><rect x="124" y="531" width="1" height="9" fill="#000" /><rect x="111.5" y="515.5" width="26" height="15" fill="#ffffd0" stroke="#000"/><text x="124.5" y="527" font-size="11" fill="#000" text-anchor="middle" stroke="#000" stroke-width="0.3" textLength="14.76" lengthAdjust="spacingAndGlyphs">-71</text><rect x="254" y="539" width="1" height="9" fill="#000" /><rect x="241.5" y="523.5" width="26" height="15" fill="#ffffd0" stroke="#000"/><text x="254.5" y="535" font-size="11" fill="#000" text-anchor="middle" stroke="#000" stroke-width="0.3" textLength="14.76" lengthAdjust="spacingAndGlyphs">-58</text><rect x="382" y="533" width="1" height="9" fill="#000" /><rect x="369.5" y="517.5" width="26" height="15" fill="#ffffd0" stroke="#000"/><text x="382.5" y="529" font-size="11" fill="#000" text-anchor="middle" stroke="#000" stroke-width="0.3" textLength="14.76" lengthAdjust="spacingAndGlyphs">-68</text><rect x="512" y="524" width="1" height="9" fill="#000" /><rect x="499.5" y="508.5" width="26" height="15" fill="#ffffd0" stroke="#000"/><text x="512.5" y="520" font-size="11" fill="#000" text-anchor="middle" stroke="#000" stroke-width="0.3" textLength="14.76" lengthAdjust="spacingAndGlyphs">-83</text><rect x="640" y="530" width="1" height="9" fill="#000" /><rect x="627.5" y="514.5" width="26" height="15" fill="#ffffd0" stroke="#000"/><text x="640.5" y="526" font-size="11" fill="#000" text-anchor="middle" stroke="#000" stroke-width="0.3" textLength="14.76" lengthAdjust="spacingAndGlyphs">-73</text><rect x="770" y="528" width="1" height="9" fill="#000" /><rect x="757.5" y="512.5" width="26" height="15" fill="#ffffd0" stroke="#000"/><text x="770.5" y="524" font-size="11" fill="#000" text-anchor="middle" stroke="#000" stroke-width="0.3" textLength="14.76" lengthAdjust="spacingAndGlyphs">-76</text><rect x="158" y="460" width="1" height="9" fill="#000" /><rect x="141.5" y="444.5" width="33" height="15" fill="#e0ffff" stroke="#000"/><text x="158.0" y="456" font-size="11" fill="#000" text-anchor="middle" stroke="#000" stroke-width="0.3" textLength="20.64" lengthAdjust="spacingAndGlyphs">-187</text><rect x="288" y="480" width="1" height="9" fill="#000" /><rect x="271.5" y="464.5" width="33" height="15" fill="#e0ffff" stroke="#000"/><text x="288.0" y="476" font-size="11" fill="#000" text-anchor="middle" stroke="#000" stroke-width="0.3" textLength="20.64" lengthAdjust="spacingAndGlyphs">-154</text><rect x="416" y="515" width="1" height="9" fill="#000" /><rect x="403.5" y="499.5" width="26" height="15" fill="#e0ffff" stroke="#000"/><text x="416.5" y="511" font-size="11" fill="#000" text-anchor="middle" stroke="#000" stroke-width="0.3" textLength="14.76" lengthAdjust="spacingAndGlyphs">-97</text><rect x="546" y="455" width="1" height="9" fill="#000" /><rect x="529.5" y="439.5" width="33" height="15" fill="#e0ffff" stroke="#000"/><text x="546.0" y="451" font-size="11" fill="#000" text-anchor="middle" stroke="#000" stroke-width="0.3" textLength="20.64" lengthAdjust="spacingAndGlyphs">-195</text><rect x="674" y="489" width="1" height="9" fill="#000" /><rect x="657.5" y="473.5" width="33" height="15" fill="#e0ffff" stroke="#000"/><text x="674.0" y="485" font-size="11" fill="#000" text-anchor="middle" stroke="#000" stroke-width="0.3" textLength="20.64" lengthAdjust="spacingAndGlyphs">-140</text><rect x="804" y="487" width="1" height="9" fill="#000" /><rect x="787.5" y="471.5" width="33" height="15" fill="#e0ffff" stroke="#000"/><text x="804.0" y="483" font-size="11" fill="#000" text-anchor="middle" stroke="#000" stroke-width="0.3" textLength="20.64" lengthAdjust="spacingAndGlyphs">-143</text><text x="32" y="425" font-size="12.5" fill="#800000" text-anchor="start" textLength="54" lengthAdjust="spacingAndGlyphs" stroke="#800000" stroke-width="0.25">H - Graph</text><rect x="867" y="430" width="46" height="46" fill="#808080" /><rect x="864.5" y="427.5" width="45" height="45" fill="#fff" stroke="#000"/><rect x="869.5" y="431.5" width="6" height="8" fill="#ff8000" stroke="#000"/><text x="879" y="440" font-size="11" fill="#000" text-anchor="start" textLength="27" lengthAdjust="spacingAndGlyphs" stroke="#000" stroke-width="0.25">HMax</text><rect x="869.5" y="445.5" width="6" height="8" fill="#ffff00" stroke="#000"/><text x="879" y="454" font-size="11" fill="#000" text-anchor="start" textLength="27" lengthAdjust="spacingAndGlyphs" stroke="#000" stroke-width="0.25">HMed</text><rect x="869.5" y="459.5" width="6" height="8" fill="#00d0a8" stroke="#000"/><text x="879" y="468" font-size="11" fill="#000" text-anchor="start" textLength="27" lengthAdjust="spacingAndGlyphs" stroke="#000" stroke-width="0.25">HMin</text><text x="32.5" y="20" font-size="14" fill="#fff" stroke="#fff" stroke-width="0.8" textLength="183" lengthAdjust="spacingAndGlyphs">RW-MMMTest - File_1.mmf</text><rect x="6" y="5" width="20" height="20" fill="#ff0000" /><rect x="8" y="7" width="4" height="12" fill="#ffff00" /><rect x="8" y="7" width="8" height="4" fill="#ffff00" /><rect x="8" y="11" width="7" height="4" fill="#ffff00" /><rect x="8" y="15" width="8" height="4" fill="#ffff00" /><rect x="14" y="12" width="10" height="11" fill="#ffff00" /><rect x="14" y="11" width="8" height="1" fill="#ffff00" /><rect x="15" y="23" width="8" height="1" fill="#ffff00" /><rect x="9" y="8" width="2" height="10" fill="#0000ff" /><rect x="9" y="8" width="6" height="2" fill="#0000ff" /><rect x="9" y="12" width="5" height="2" fill="#0000ff" /><rect x="9" y="16" width="6" height="2" fill="#0000ff" /><rect x="15" y="13" width="3" height="9" fill="#0000ff" /><rect x="15" y="13" width="6" height="2" fill="#0000ff" /><rect x="15" y="20" width="6" height="2" fill="#0000ff" /><rect x="21" y="15" width="2" height="5" fill="#0000ff" /><rect x="21" y="14" width="1" height="1" fill="#0000ff" /><rect x="21" y="20" width="1" height="1" fill="#0000ff" /><rect x="19" y="16" width="1" height="3" fill="#ff0000" /><rect x="871" y="6" width="20" height="18" fill="#000" /><rect x="871" y="6" width="19" height="17" fill="#fff" /><rect x="872" y="7" width="18" height="16" fill="#808080" /><rect x="872" y="7" width="17" height="15" fill="#dfdfdf" /><rect x="873" y="8" width="16" height="14" fill="#c0c0c0" /><rect x="891" y="6" width="20" height="18" fill="#000" /><rect x="891" y="6" width="19" height="17" fill="#fff" /><rect x="892" y="7" width="18" height="16" fill="#808080" /><rect x="892" y="7" width="17" height="15" fill="#dfdfdf" /><rect x="893" y="8" width="16" height="14" fill="#c0c0c0" /><rect x="913" y="6" width="20" height="18" fill="#000" /><rect x="913" y="6" width="19" height="17" fill="#fff" /><rect x="914" y="7" width="18" height="16" fill="#808080" /><rect x="914" y="7" width="17" height="15" fill="#dfdfdf" /><rect x="915" y="8" width="16" height="14" fill="#c0c0c0" /><rect x="876" y="18" width="8" height="2" fill="#000" /><rect x="896" y="10" width="11" height="2" fill="#000" /><rect x="896.5" y="10.5" width="10" height="9" fill="none" stroke="#000"/><path d="M918,11 L926,19 M926,11 L918,19" stroke="#000" stroke-width="2" shape-rendering="auto"/><text x="10" y="40" font-size="11" fill="#000" text-anchor="start" textLength="17" lengthAdjust="spacingAndGlyphs" stroke="#000" stroke-width="0.2">File</text><rect x="10" y="42" width="6" height="1" fill="#000" /><text x="38" y="40" font-size="11" fill="#000" text-anchor="start" textLength="31" lengthAdjust="spacingAndGlyphs" stroke="#000" stroke-width="0.2">Export</text><rect x="38" y="42" width="7" height="1" fill="#000" /><text x="80" y="40" font-size="11" fill="#000" text-anchor="start" textLength="30" lengthAdjust="spacingAndGlyphs" stroke="#000" stroke-width="0.2">Graph</text><rect x="80" y="42" width="8" height="1" fill="#000" /><text x="121" y="40" font-size="11" fill="#000" text-anchor="start" textLength="45.7" lengthAdjust="spacingAndGlyphs" stroke="#000" stroke-width="0.2">Scanning</text><rect x="121" y="42" width="7" height="1" fill="#000" /><text x="178" y="40" font-size="11" fill="#000" text-anchor="start" textLength="24" lengthAdjust="spacingAndGlyphs" stroke="#000" stroke-width="0.2">View</text><rect x="178" y="42" width="7" height="1" fill="#000" /><text x="213" y="40" font-size="11" fill="#000" text-anchor="start" textLength="23" lengthAdjust="spacingAndGlyphs" stroke="#000" stroke-width="0.2">Help</text><rect x="213" y="42" width="8" height="1" fill="#000" /><rect x="287" y="48" width="1" height="50" fill="#808080" /><rect x="288" y="48" width="1" height="50" fill="#ffffff" /><rect x="431" y="48" width="1" height="50" fill="#808080" /><rect x="432" y="48" width="1" height="50" fill="#ffffff" /><rect x="645" y="48" width="1" height="50" fill="#808080" /><rect x="646" y="48" width="1" height="50" fill="#ffffff" /><rect x="789" y="48" width="1" height="50" fill="#808080" /><rect x="790" y="48" width="1" height="50" fill="#ffffff" /><text x="41.5" y="92" font-size="11" fill="#000" text-anchor="middle" textLength="22.7" lengthAdjust="spacingAndGlyphs" stroke="#000" stroke-width="0.2">New</text><text x="111.5" y="92" font-size="11" fill="#000" text-anchor="middle" textLength="26.8" lengthAdjust="spacingAndGlyphs" stroke="#000" stroke-width="0.2">Open</text><text x="182" y="92" font-size="11" fill="#000" text-anchor="middle" textLength="20.8" lengthAdjust="spacingAndGlyphs" stroke="#000" stroke-width="0.2">Add</text><text x="251.7" y="92" font-size="11" fill="#000" text-anchor="middle" textLength="26.5" lengthAdjust="spacingAndGlyphs" stroke="#000" stroke-width="0.2">Save</text><text x="325.5" y="92" font-size="11" fill="#000" text-anchor="middle" textLength="22" lengthAdjust="spacingAndGlyphs" stroke="#000" stroke-width="0.2">Print</text><text x="395.3" y="92" font-size="11" fill="#000" text-anchor="middle" textLength="25.7" lengthAdjust="spacingAndGlyphs" stroke="#000" stroke-width="0.2">Copy</text><text x="469.5" y="92" font-size="11" fill="#000" text-anchor="middle" textLength="54" lengthAdjust="spacingAndGlyphs" stroke="#000" stroke-width="0.2">Parameters</text><text x="539.5" y="92" font-size="11" fill="#000" text-anchor="middle" textLength="28" lengthAdjust="spacingAndGlyphs" stroke="#000" stroke-width="0.2">Scale</text><text x="610" y="92" font-size="11" fill="#000" text-anchor="middle" textLength="28" lengthAdjust="spacingAndGlyphs" stroke="#000" stroke-width="0.2">Table</text><text x="683" y="92" font-size="11" fill="#000" text-anchor="middle" textLength="23" lengthAdjust="spacingAndGlyphs" stroke="#000" stroke-width="0.2">Start</text><text x="753.5" y="92" font-size="11" fill="#000" text-anchor="middle" textLength="29" lengthAdjust="spacingAndGlyphs" stroke="#000" stroke-width="0.2">Setup</text><text x="827.6" y="92" font-size="11" fill="#000" text-anchor="middle" textLength="23" lengthAdjust="spacingAndGlyphs" stroke="#000" stroke-width="0.2">Help</text><text x="897.8" y="92" font-size="11" fill="#000" text-anchor="middle" textLength="17.4" lengthAdjust="spacingAndGlyphs" stroke="#000" stroke-width="0.2">Exit</text><rect x="24" y="53" width="5" height="17" fill="#000080" /><rect x="25" y="54" width="3" height="6" fill="#ff0000" /><rect x="25" y="60" width="3" height="9" fill="#ffff00" /><rect x="25" y="69" width="3" height="7" fill="#000080" /><rect x="26" y="70" width="1" height="5" fill="#ffff00" /><rect x="26" y="75" width="1" height="3" fill="#000" /><rect x="29" y="56" width="1" height="1" fill="#000080" /><rect x="29" y="56" width="2" height="1" fill="#000080" /><rect x="30" y="56" width="1" height="7" fill="#000080" /><polygon points="35.50,53.50 50.50,53.50 55.50,58.50 55.50,78.50 35.50,78.50" fill="#00ffff" stroke="#000080" stroke-width="1" /><polygon points="50.50,53.50 50.50,58.50 55.50,58.50" fill="#e0e0e0" stroke="#000080" stroke-width="1" /><rect x="38" y="56" width="7" height="1" fill="#800000" /><rect x="38" y="58" width="7" height="1" fill="#800000" /><rect x="40" y="60" width="11" height="1" fill="#800000" /><rect x="37.5" y="62.5" width="16" height="14" fill="#fff" stroke="#008080"/><polygon points="83.50,59.50 97.50,59.50 99.50,61.50 99.50,75.50 83.50,75.50" fill="#808080" stroke="#000080" stroke-width="1" /><rect x="87" y="60" width="9" height="5" fill="#000080" /><rect x="88" y="60" width="7" height="4" fill="#008080" /><rect x="93" y="61" width="1" height="3" fill="#c0c0c0" /><rect x="86" y="67" width="11" height="9" fill="#000080" /><rect x="87" y="68" width="9" height="7" fill="#c0c0c0" /><rect x="84" y="73" width="1" height="2" fill="#e0e0e0" /><rect x="98" y="73" width="1" height="2" fill="#e0e0e0" /><polygon points="103.50,64.50 107.50,64.50 107.50,60.50 115.50,68.00 107.50,75.50 107.50,71.50 103.50,71.50" fill="#00ff00" stroke="#0000ff" stroke-width="1.2" shape-rendering="auto"/><polygon points="118.50,53.50 133.50,53.50 138.50,58.50 138.50,78.50 118.50,78.50" fill="#00ffff" stroke="#000080" stroke-width="1" /><polygon points="133.50,53.50 133.50,58.50 138.50,58.50" fill="#e0e0e0" stroke="#000080" stroke-width="1" /><rect x="121" y="56" width="7" height="1" fill="#800000" /><rect x="121" y="58" width="7" height="1" fill="#800000" /><rect x="123" y="60" width="11" height="1" fill="#800000" /><rect x="120.5" y="62.5" width="16" height="14" fill="#fff" stroke="#008080"/><rect x="122" y="64" width="1" height="11" fill="#000" /><rect x="122" y="74" width="13" height="1" fill="#000" /><rect x="125" y="69" width="2" height="5" fill="#0000ff" /><rect x="128" y="65" width="2" height="9" fill="#ff0000" /><rect x="131" y="67" width="2" height="7" fill="#008000" /><polygon points="160.50,54.50 169.50,54.50 172.50,57.50 172.50,69.50 160.50,69.50" fill="#fff" stroke="#000080" stroke-width="1" /><rect x="162" y="58" width="8" height="1" fill="#a0a0a0" /><rect x="162" y="61" width="8" height="1" fill="#a0a0a0" /><rect x="162" y="64" width="8" height="1" fill="#a0a0a0" /><rect x="162" y="67" width="8" height="1" fill="#a0a0a0" /><polygon points="156.50,58.50 165.50,58.50 168.50,61.50 168.50,73.50 156.50,73.50" fill="#fff" stroke="#000080" stroke-width="1" /><rect x="158" y="62" width="8" height="1" fill="#a0a0a0" /><rect x="158" y="65" width="8" height="1" fill="#a0a0a0" /><rect x="158" y="68" width="8" height="1" fill="#a0a0a0" /><rect x="158" y="71" width="8" height="1" fill="#a0a0a0" /><polygon points="152.50,62.50 161.50,62.50 164.50,65.50 164.50,77.50 152.50,77.50" fill="#fff" stroke="#000080" stroke-width="1" /><rect x="154" y="66" width="8" height="1" fill="#a0a0a0" /><rect x="154" y="69" width="8" height="1" fill="#a0a0a0" /><rect x="154" y="72" width="8" height="1" fill="#a0a0a0" /><rect x="154" y="75" width="8" height="1" fill="#a0a0a0" /><rect x="176" y="55" width="8" height="2" fill="#008080" /><polygon points="183.00,52.00 187.00,56.00 183.00,60.00" fill="#008080" stroke="none" stroke-width="1" shape-rendering="auto"/><rect x="170" y="75" width="14" height="2" fill="#008080" /><polygon points="183.00,72.00 187.00,76.00 183.00,80.00" fill="#008080" stroke="none" stroke-width="1" shape-rendering="auto"/><polygon points="179.50,61.50 182.50,61.50 182.50,64.50 185.50,64.50 185.50,67.50 182.50,67.50 182.50,70.50 179.50,70.50 179.50,67.50 176.50,67.50 176.50,64.50 179.50,64.50" fill="#00ff00" stroke="#0000ff" stroke-width="1.3" /><polygon points="189.50,52.50 204.50,52.50 209.50,57.50 209.50,77.50 189.50,77.50" fill="#00ffff" stroke="#000080" stroke-width="1" /><polygon points="204.50,52.50 204.50,57.50 209.50,57.50" fill="#e0e0e0" stroke="#000080" stroke-width="1" /><rect x="192" y="55" width="7" height="1" fill="#800000" /><rect x="192" y="57" width="7" height="1" fill="#800000" /><rect x="194" y="59" width="11" height="1" fill="#800000" /><rect x="191.5" y="61.5" width="16" height="14" fill="#fff" stroke="#008080"/><rect x="193" y="63" width="1" height="11" fill="#000" /><rect x="193" y="73" width="13" height="1" fill="#000" /><rect x="196" y="68" width="2" height="5" fill="#0000ff" /><rect x="199" y="64" width="2" height="9" fill="#ff0000" /><rect x="202" y="66" width="2" height="7" fill="#008000" /><polygon points="223.50,53.50 238.50,53.50 243.50,58.50 243.50,78.50 223.50,78.50" fill="#00ffff" stroke="#000080" stroke-width="1" /><polygon points="238.50,53.50 238.50,58.50 243.50,58.50" fill="#e0e0e0" stroke="#000080" stroke-width="1" /><rect x="226" y="56" width="7" height="1" fill="#800000" /><rect x="226" y="58" width="7" height="1" fill="#800000" /><rect x="228" y="60" width="11" height="1" fill="#800000" /><rect x="225.5" y="62.5" width="16" height="14" fill="#fff" stroke="#008080"/><rect x="227" y="64" width="1" height="11" fill="#000" /><rect x="227" y="74" width="13" height="1" fill="#000" /><rect x="230" y="69" width="2" height="5" fill="#0000ff" /><rect x="233" y="65" width="2" height="9" fill="#ff0000" /><rect x="236" y="67" width="2" height="7" fill="#008000" /><polygon points="247.50,64.50 251.50,64.50 251.50,60.50 259.50,68.00 251.50,75.50 251.50,71.50 247.50,71.50" fill="#00ff00" stroke="#0000ff" stroke-width="1.2" shape-rendering="auto"/><polygon points="262.50,59.50 276.50,59.50 278.50,61.50 278.50,75.50 262.50,75.50" fill="#808080" stroke="#000080" stroke-width="1" /><rect x="266" y="60" width="9" height="5" fill="#000080" /><rect x="267" y="60" width="7" height="4" fill="#008080" /><rect x="272" y="61" width="1" height="3" fill="#c0c0c0" /><rect x="265" y="67" width="11" height="9" fill="#000080" /><rect x="266" y="68" width="9" height="7" fill="#c0c0c0" /><rect x="263" y="73" width="1" height="2" fill="#e0e0e0" /><rect x="277" y="73" width="1" height="2" fill="#e0e0e0" /><polygon points="296.50,53.50 311.50,53.50 316.50,58.50 316.50,78.50 296.50,78.50" fill="#00ffff" stroke="#000080" stroke-width="1" /><polygon points="311.50,53.50 311.50,58.50 316.50,58.50" fill="#e0e0e0" stroke="#000080" stroke-width="1" /><rect x="299" y="56" width="7" height="1" fill="#800000" /><rect x="299" y="58" width="7" height="1" fill="#800000" /><rect x="301" y="60" width="11" height="1" fill="#800000" /><rect x="298.5" y="62.5" width="16" height="14" fill="#fff" stroke="#008080"/><rect x="300" y="64" width="1" height="11" fill="#000" /><rect x="300" y="74" width="13" height="1" fill="#000" /><rect x="303" y="69" width="2" height="5" fill="#0000ff" /><rect x="306" y="65" width="2" height="9" fill="#ff0000" /><rect x="309" y="67" width="2" height="7" fill="#008000" /><polygon points="320.50,64.50 324.50,64.50 324.50,60.50 332.50,68.00 324.50,75.50 324.50,71.50 320.50,71.50" fill="#00ff00" stroke="#0000ff" stroke-width="1.2" shape-rendering="auto"/><polygon points="338.50,60.50 350.50,60.50 352.50,62.50 353.50,62.50 354.50,64.50 352.50,64.50 350.50,68.50 337.50,68.50" fill="#fff" stroke="#000" stroke-width="1.2" shape-rendering="auto"/><rect x="341" y="62" width="5" height="1" fill="#000080" /><rect x="346" y="62" width="4" height="1" fill="#000080" /><rect x="340" y="64" width="9" height="1" fill="#000080" /><rect x="339" y="66" width="2" height="1" fill="#000080" /><rect x="341" y="66" width="5" height="1" fill="#000080" /><polygon points="335.50,68.50 352.50,68.50 354.50,70.50 354.50,77.50 352.50,78.50 335.50,78.50 333.50,77.50 333.50,70.50" fill="#c0c0c0" stroke="#000080" stroke-width="1.2" shape-rendering="auto"/><rect x="334" y="74" width="20" height="4" fill="#008080" /><rect x="334" y="73" width="20" height="1" fill="#000080" /><rect x="348" y="71" width="2" height="1" fill="#ff0000" /><rect x="336" y="76" width="1" height="1" fill="#ff0000" /><rect x="338" y="76" width="1" height="1" fill="#0000ff" /><rect x="340" y="76" width="1" height="1" fill="#ff0000" /><rect x="342" y="76" width="1" height="1" fill="#0000ff" /><polygon points="365.50,53.50 380.50,53.50 385.50,58.50 385.50,78.50 365.50,78.50" fill="#00ffff" stroke="#000080" stroke-width="1" /><polygon points="380.50,53.50 380.50,58.50 385.50,58.50" fill="#e0e0e0" stroke="#000080" stroke-width="1" /><rect x="368" y="56" width="7" height="1" fill="#800000" /><rect x="368" y="58" width="7" height="1" fill="#800000" /><rect x="370" y="60" width="11" height="1" fill="#800000" /><rect x="367.5" y="62.5" width="16" height="14" fill="#fff" stroke="#008080"/><rect x="369" y="64" width="1" height="11" fill="#000" /><rect x="369" y="74" width="13" height="1" fill="#000" /><rect x="372" y="69" width="2" height="5" fill="#0000ff" /><rect x="375" y="65" width="2" height="9" fill="#ff0000" /><rect x="378" y="67" width="2" height="7" fill="#008000" /><rect x="388" y="58" width="5" height="2" fill="#008080" /><polygon points="392.00,55.00 396.00,59.00 392.00,63.00" fill="#008080" stroke="none" stroke-width="1" shape-rendering="auto"/><rect x="388" y="67" width="5" height="2" fill="#008080" /><polygon points="392.00,64.00 396.00,68.00 392.00,72.00" fill="#008080" stroke="none" stroke-width="1" shape-rendering="auto"/><rect x="388" y="76" width="5" height="2" fill="#008080" /><polygon points="392.00,73.00 396.00,77.00 392.00,81.00" fill="#008080" stroke="none" stroke-width="1" shape-rendering="auto"/><defs><pattern id="gdot" width="2" height="2" patternUnits="userSpaceOnUse"><rect width="2" height="2" fill="#f0f0f0"/><rect width="1" height="1" fill="#00ff00"/></pattern><pattern id="dith" width="2" height="2" patternUnits="userSpaceOnUse"><rect width="2" height="2" fill="#ffffff"/><rect width="1" height="1" fill="#c0c0c0"/><rect x="1" y="1" width="1" height="1" fill="#c0c0c0"/></pattern><pattern id="dithd" width="2" height="2" patternUnits="userSpaceOnUse"><rect width="2" height="2" fill="#c0c0c0"/><rect width="1" height="1" fill="#404040"/><rect x="1" y="1" width="1" height="1" fill="#404040"/></pattern><pattern id="stripe" width="2" height="2" patternUnits="userSpaceOnUse"><rect width="2" height="1" fill="#00ff00"/><rect y="1" width="2" height="1" fill="#00ffff"/></pattern></defs><rect x="398.5" y="54.5" width="25" height="24" rx="2" fill="url(#gdot)" stroke="#000080" stroke-width="1.3" shape-rendering="auto"/><polygon points="406.50,58.50 411.50,53.50 416.50,58.50" fill="#808080" stroke="#000" stroke-width="1.2" shape-rendering="auto"/><rect x="410" y="56" width="3" height="1" fill="#0000ff" /><rect x="400.5" y="68.5" width="21" height="9" fill="#fff" stroke="#c0c0c0"/><text x="411" y="76.5" font-size="8.5" fill="#000" stroke="#000" stroke-width="0.35" text-anchor="middle" textLength="17" lengthAdjust="spacingAndGlyphs">.WMF</text><polygon points="441.50,53.50 466.50,78.50 441.50,78.50" fill="#ffff00" stroke="#000" stroke-width="1.3" shape-rendering="auto"/><polygon points="445.50,64.50 455.50,74.50 445.50,74.50" fill="#c0c0c0" stroke="#000" stroke-width="1.2" shape-rendering="auto"/><rect x="442" y="57.0" width="2" height="1" fill="#000" /><rect x="445.0" y="77" width="1" height="2" fill="#000" /><rect x="442" y="60.5" width="2" height="1" fill="#000" /><rect x="448.5" y="77" width="1" height="2" fill="#000" /><rect x="442" y="64.0" width="2" height="1" fill="#000" /><rect x="452.0" y="77" width="1" height="2" fill="#000" /><rect x="442" y="67.5" width="2" height="1" fill="#000" /><rect x="455.5" y="77" width="1" height="2" fill="#000" /><rect x="442" y="71.0" width="2" height="1" fill="#000" /><rect x="459.0" y="77" width="1" height="2" fill="#000" /><rect x="442" y="74.5" width="2" height="1" fill="#000" /><rect x="462.5" y="77" width="1" height="2" fill="#000" /><rect x="458" y="53" width="12" height="12" fill="#000" /><rect x="459" y="54" width="10" height="10" fill="#fff" /><rect x="460" y="55" width="8" height="8" fill="#ff0000" /><rect x="465" y="60" width="12" height="12" fill="#000" /><rect x="466" y="61" width="10" height="10" fill="#fff" /><rect x="467" y="62" width="8" height="8" fill="#008000" /><rect x="472" y="67" width="12" height="12" fill="#000" /><rect x="473" y="68" width="10" height="10" fill="#fff" /><rect x="474" y="69" width="8" height="8" fill="#0000ff" /><rect x="488" y="55" width="9" height="2" fill="#800000" /><rect x="488" y="61" width="9" height="3" fill="#800000" /><rect x="488" y="67" width="9" height="4" fill="#800000" /><rect x="488" y="74" width="9" height="5" fill="#800000" /><rect x="515" y="53" width="1" height="8" fill="#000" /><rect x="559" y="53" width="1" height="8" fill="#000" /><rect x="516" y="55" width="43" height="1" fill="#000" /><polygon points="516.00,55.50 520.00,53.00 520.00,58.00" fill="#000" stroke="none" stroke-width="1" shape-rendering="auto"/><polygon points="559.00,55.50 555.00,53.00 555.00,58.00" fill="#000" stroke="none" stroke-width="1" shape-rendering="auto"/><rect x="511" y="60" width="50" height="16" fill="#000" /><rect x="512" y="61" width="3" height="14" fill="#ffff00" /><rect x="516" y="61" width="43" height="14" fill="#fff" /><rect x="512" y="63.0" width="2" height="1" fill="#000" /><rect x="512" y="65.5" width="2" height="1" fill="#000" /><rect x="512" y="68.0" width="2" height="1" fill="#000" /><rect x="512" y="70.5" width="2" height="1" fill="#000" /><rect x="512" y="73.0" width="2" height="1" fill="#000" /><rect x="515" y="76" width="45" height="4" fill="#000" /><rect x="516" y="76" width="43" height="3" fill="#ffff00" /><rect x="517" y="77" width="1" height="2" fill="#000" /><rect x="520" y="77" width="1" height="2" fill="#000" /><rect x="523" y="77" width="1" height="2" fill="#000" /><rect x="526" y="77" width="1" height="2" fill="#000" /><rect x="529" y="77" width="1" height="2" fill="#000" /><rect x="532" y="77" width="1" height="2" fill="#000" /><rect x="535" y="77" width="1" height="2" fill="#000" /><rect x="538" y="77" width="1" height="2" fill="#000" /><rect x="541" y="77" width="1" height="2" fill="#000" /><rect x="544" y="77" width="1" height="2" fill="#000" /><rect x="547" y="77" width="1" height="2" fill="#000" /><rect x="550" y="77" width="1" height="2" fill="#000" /><rect x="553" y="77" width="1" height="2" fill="#000" /><rect x="556" y="77" width="1" height="2" fill="#000" /><rect x="559" y="77" width="1" height="2" fill="#000" /><rect x="518" y="62" width="1" height="12" fill="#0000ff" /><rect x="518" y="73" width="40" height="1" fill="#0000ff" /><rect x="522" y="68" width="2" height="5" fill="#0000ff" /><rect x="525" y="64" width="2" height="9" fill="#ff0000" /><rect x="528" y="66" width="2" height="7" fill="#008000" /><rect x="534" y="68" width="2" height="5" fill="#0000ff" /><rect x="537" y="64" width="2" height="9" fill="#ff0000" /><rect x="540" y="66" width="2" height="7" fill="#008000" /><rect x="546" y="68" width="2" height="5" fill="#0000ff" /><rect x="549" y="64" width="2" height="9" fill="#ff0000" /><rect x="552" y="66" width="2" height="7" fill="#008000" /><rect x="560" y="60" width="7" height="1" fill="#000" /><rect x="560" y="75" width="7" height="1" fill="#000" /><rect x="564" y="61" width="1" height="14" fill="#000" /><polygon points="564.50,61.00 561.50,65.00 567.50,65.00" fill="#000" stroke="none" stroke-width="1" shape-rendering="auto"/><polygon points="564.50,75.00 561.50,71.00 567.50,71.00" fill="#000" stroke="none" stroke-width="1" shape-rendering="auto"/><rect x="581" y="53" width="56" height="27" fill="#000" /><rect x="582" y="54" width="17" height="5" fill="#fff" /><rect x="583" y="55" width="15" height="3" fill="#00ffff" /><rect x="600" y="54" width="17" height="5" fill="#fff" /><rect x="601" y="55" width="15" height="3" fill="#00ffff" /><rect x="618" y="54" width="18" height="5" fill="#fff" /><rect x="619" y="55" width="16" height="3" fill="#00ffff" /><rect x="582" y="60" width="17" height="4" fill="#fff" /><rect x="583" y="61" width="15" height="2" fill="#00ffff" /><rect x="600" y="60" width="17" height="4" fill="#fff" /><rect x="601" y="61" width="15" height="2" fill="#c0c0c0" /><rect x="618" y="60" width="18" height="4" fill="#fff" /><rect x="619" y="61" width="16" height="2" fill="#c0c0c0" /><rect x="582" y="65" width="17" height="4" fill="#fff" /><rect x="583" y="66" width="15" height="2" fill="#00ffff" /><rect x="600" y="65" width="17" height="4" fill="#fff" /><rect x="601" y="66" width="15" height="2" fill="#c0c0c0" /><rect x="618" y="65" width="18" height="4" fill="#fff" /><rect x="619" y="66" width="16" height="2" fill="#c0c0c0" /><rect x="582" y="70" width="17" height="4" fill="#fff" /><rect x="583" y="71" width="15" height="2" fill="#00ffff" /><rect x="600" y="70" width="17" height="4" fill="#fff" /><rect x="601" y="71" width="15" height="2" fill="#c0c0c0" /><rect x="618" y="70" width="18" height="4" fill="#fff" /><rect x="619" y="71" width="16" height="2" fill="#c0c0c0" /><rect x="582" y="75" width="17" height="4" fill="#fff" /><rect x="583" y="76" width="15" height="2" fill="#00ffff" /><rect x="600" y="75" width="17" height="4" fill="#fff" /><rect x="601" y="76" width="15" height="2" fill="#c0c0c0" /><rect x="618" y="75" width="18" height="4" fill="#fff" /><rect x="619" y="76" width="16" height="2" fill="#c0c0c0" /><polygon points="671.00,55.00 695.00,66.50 671.00,78.00" fill="#ffff00" stroke="none" stroke-width="1" shape-rendering="auto"/><polygon points="672.00,56.50 692.50,66.50 672.00,76.50" fill="#000080" stroke="none" stroke-width="1" shape-rendering="auto"/><polygon points="673.00,58.00 690.00,66.50 673.00,75.00" fill="url(#stripe)" stroke="none" stroke-width="1" shape-rendering="auto"/><rect x="725" y="64" width="15" height="11" fill="#000" /><rect x="725" y="64" width="14" height="10" fill="#c0c0c0" /><rect x="727" y="66" width="10" height="7" fill="#000" /><rect x="728" y="67" width="9" height="6" fill="#008080" /><rect x="728" y="67" width="1" height="2" fill="#00ffff" /><rect x="724" y="75" width="17" height="5" fill="#000" /><rect x="724" y="75" width="16" height="4" fill="#e0e0e0" /><rect x="726" y="77" width="2" height="1" fill="#00ff00" /><rect x="733" y="77" width="4" height="1" fill="#000" /><rect x="740" y="55" width="9" height="8" fill="#000" /><rect x="740" y="55" width="8" height="7" fill="#fff" /><rect x="740" y="56" width="2" height="5" fill="#ffff00" /><rect x="743" y="56" width="1" height="5" fill="#808080" /><rect x="745" y="56" width="1" height="5" fill="#808080" /><polyline points="748.00,58.50 754.50,58.50 754.50,73.50 752.00,76.50 758.00,76.50" fill="none" stroke="#000" stroke-width="1.2" shape-rendering="auto"/><rect x="758" y="71" width="9" height="8" fill="#000" /><rect x="758" y="71" width="8" height="7" fill="#fff" /><rect x="764" y="72" width="2" height="5" fill="#ffff00" /><rect x="760" y="72" width="1" height="5" fill="#808080" /><rect x="762" y="72" width="1" height="5" fill="#808080" /><polygon points="766.50,55.50 781.50,55.50 781.50,64.50 778.50,67.50 778.50,77.50 769.50,77.50 769.50,67.50 766.50,64.50" fill="#e0e0e0" stroke="#000" stroke-width="1.2" shape-rendering="auto"/><rect x="769" y="57" width="10" height="7" fill="#000" /><rect x="770" y="58" width="9" height="5" fill="#008080" /><rect x="770" y="58" width="1" height="2" fill="#00ffff" /><rect x="771" y="69" width="6" height="1" fill="#808080" /><rect x="771" y="71" width="6" height="1" fill="#808080" /><rect x="771" y="73" width="6" height="1" fill="#808080" /><rect x="771" y="75" width="6" height="1" fill="#808080" /><defs><pattern id="vstripe" width="2" height="2" patternUnits="userSpaceOnUse"><rect width="2" height="2" fill="#ffff80"/><rect width="1" height="2" fill="#ffff00"/></pattern></defs><g shape-rendering="auto"><path d="M801,78 L805,62 Q807,57 813,57 L819,57 Q822,58 823,60 Q824,58 827,57 L833,57 Q839,57 841,62 L844,78 L824,79 L822,78 L820,79 Z" fill="#000"/><path d="M802.5,77 L806,62 Q808,58 813,58 L818.5,58 Q821.5,58.5 822,60 L822,77 Z" fill="#fff"/><path d="M823.5,77 L823.5,60 Q824,58.5 827.5,58 L833,58 Q838,58 840,62 L843,77 Z" fill="#fff"/><path d="M804,76 L807,62.5 Q808.5,59 813,59 L818,59 Q821,59.5 821,61 L821,76 Z" fill="url(#vstripe)"/><path d="M824.5,76 L824.5,61 Q825,59.5 828,59 L833,59 Q837,59 839,62.5 L842,76 Z" fill="url(#vstripe)"/></g><rect x="809" y="62" width="11" height="1" fill="#b0b0a0" /><rect x="826" y="62" width="11" height="1" fill="#b0b0a0" /><rect x="809" y="64" width="11" height="1" fill="#b0b0a0" /><rect x="826" y="64" width="11" height="1" fill="#b0b0a0" /><rect x="809" y="66" width="11" height="1" fill="#b0b0a0" /><rect x="826" y="66" width="11" height="1" fill="#b0b0a0" /><rect x="808" y="68" width="11" height="1" fill="#b0b0a0" /><rect x="826" y="68" width="12" height="1" fill="#b0b0a0" /><rect x="808" y="70" width="11" height="1" fill="#b0b0a0" /><rect x="826" y="70" width="12" height="1" fill="#b0b0a0" /><rect x="808" y="72" width="11" height="1" fill="#b0b0a0" /><rect x="826" y="72" width="12" height="1" fill="#b0b0a0" /><rect x="807" y="74" width="11" height="1" fill="#b0b0a0" /><rect x="826" y="74" width="13" height="1" fill="#b0b0a0" /><rect x="803" y="77" width="40" height="1" fill="#000" /><rect x="804" y="78" width="38" height="2" fill="#808080" /><path d="M843.5,59 Q843.5,54.5 848.5,54.5 Q853.5,54.5 853.5,58.5 Q853.5,61.5 849.5,63.5 L848.5,66.5" fill="none" stroke="#0000ff" stroke-width="4.4" shape-rendering="auto"/><path d="M843.5,59 Q843.5,54.5 848.5,54.5 Q853.5,54.5 853.5,58.5 Q853.5,61.5 849.5,63.5 L848.5,66.5" fill="none" stroke="#00ff00" stroke-width="2.2" shape-rendering="auto"/><rect x="846" y="68" width="5" height="5" fill="#0000ff" /><rect x="847" y="69" width="3" height="3" fill="#00ff00" /><rect x="870" y="56" width="15" height="23" fill="#0000ff" /><rect x="871" y="57" width="13" height="21" fill="#008080" /><polygon points="871.00,57.00 881.00,60.00 881.00,78.00 871.00,75.00" fill="#00ffff" stroke="#000080" stroke-width="1" shape-rendering="auto"/><rect x="878" y="66" width="1" height="3" fill="#000080" /><rect x="879" y="66" width="1" height="3" fill="#fff" /><polygon points="899.50,63.50 895.50,63.50 895.50,59.50 887.50,67.00 895.50,74.50 895.50,70.50 899.50,70.50" fill="#00ff00" stroke="#0000ff" stroke-width="1.2" shape-rendering="auto"/><g shape-rendering="auto"><path d="M903.5,64.5 L907.5,68 L911,64 L917.5,63 L920.5,66.5 M911,64 L916,69.5 L919,73 L922.5,70 M913.5,68.5 L910.5,71.5 L915.5,77" fill="none" stroke="#ffff00" stroke-width="4" stroke-linejoin="round" stroke-linecap="round"/><circle cx="907.6" cy="60.5" r="3.7" fill="#ffff00"/><path d="M903.5,64.5 L907.5,68 L911,64 L917.5,63 L920.5,66.5 M911,64 L916,69.5 L919,73 L922.5,70 M913.5,68.5 L910.5,71.5 L915.5,77" fill="none" stroke="#008080" stroke-width="2.2" stroke-linejoin="round" stroke-linecap="round"/><circle cx="907.6" cy="60.5" r="2.7" fill="#008080"/></g><rect x="4" y="676" width="931" height="1" fill="#c0c0c0" /><rect x="40" y="677" width="878" height="18" fill="url(#dith)"/><rect x="4" y="677" width="18" height="18" fill="#000" /><rect x="4" y="677" width="17" height="17" fill="#dfdfdf" /><rect x="5" y="678" width="16" height="16" fill="#808080" /><rect x="5" y="678" width="15" height="15" fill="#fff" /><rect x="6" y="679" width="14" height="14" fill="#c0c0c0" /><polygon points="9.00,686.00 13.00,682.00 13.00,690.00" fill="#000" stroke="none" stroke-width="1" shape-rendering="auto"/><rect x="22" y="677" width="18" height="18" fill="#000" /><rect x="22" y="677" width="17" height="17" fill="#dfdfdf" /><rect x="23" y="678" width="16" height="16" fill="#808080" /><rect x="23" y="678" width="15" height="15" fill="#fff" /><rect x="24" y="679" width="14" height="14" fill="#c0c0c0" /><rect x="24" y="679" width="14" height="14" fill="url(#dithd)" /><rect x="917" y="677" width="18" height="18" fill="#000" /><rect x="917" y="677" width="17" height="17" fill="#dfdfdf" /><rect x="918" y="678" width="16" height="16" fill="#808080" /><rect x="918" y="678" width="15" height="15" fill="#fff" /><rect x="919" y="679" width="14" height="14" fill="#c0c0c0" /><polygon points="928.00,686.00 924.00,682.00 924.00,690.00" fill="#000" stroke="none" stroke-width="1" /><rect x="4" y="697" width="931" height="1" fill="#808080" /><rect x="4" y="697" width="1" height="19" fill="#808080" /><rect x="4" y="715" width="931" height="1" fill="#ffffff" /><rect x="934" y="697" width="1" height="19" fill="#ffffff" /><line x1="921" y1="714" x2="933" y2="702" stroke="#808080" stroke-width="1" shape-rendering="auto"/><line x1="922" y1="714" x2="933" y2="703" stroke="#ffffff" stroke-width="1" shape-rendering="auto"/><line x1="925" y1="714" x2="933" y2="706" stroke="#808080" stroke-width="1" shape-rendering="auto"/><line x1="926" y1="714" x2="933" y2="707" stroke="#ffffff" stroke-width="1" shape-rendering="auto"/><line x1="929" y1="714" x2="933" y2="710" stroke="#808080" stroke-width="1" shape-rendering="auto"/><line x1="930" y1="714" x2="933" y2="711" stroke="#ffffff" stroke-width="1" shape-rendering="auto"/></svg>

</body></html>
